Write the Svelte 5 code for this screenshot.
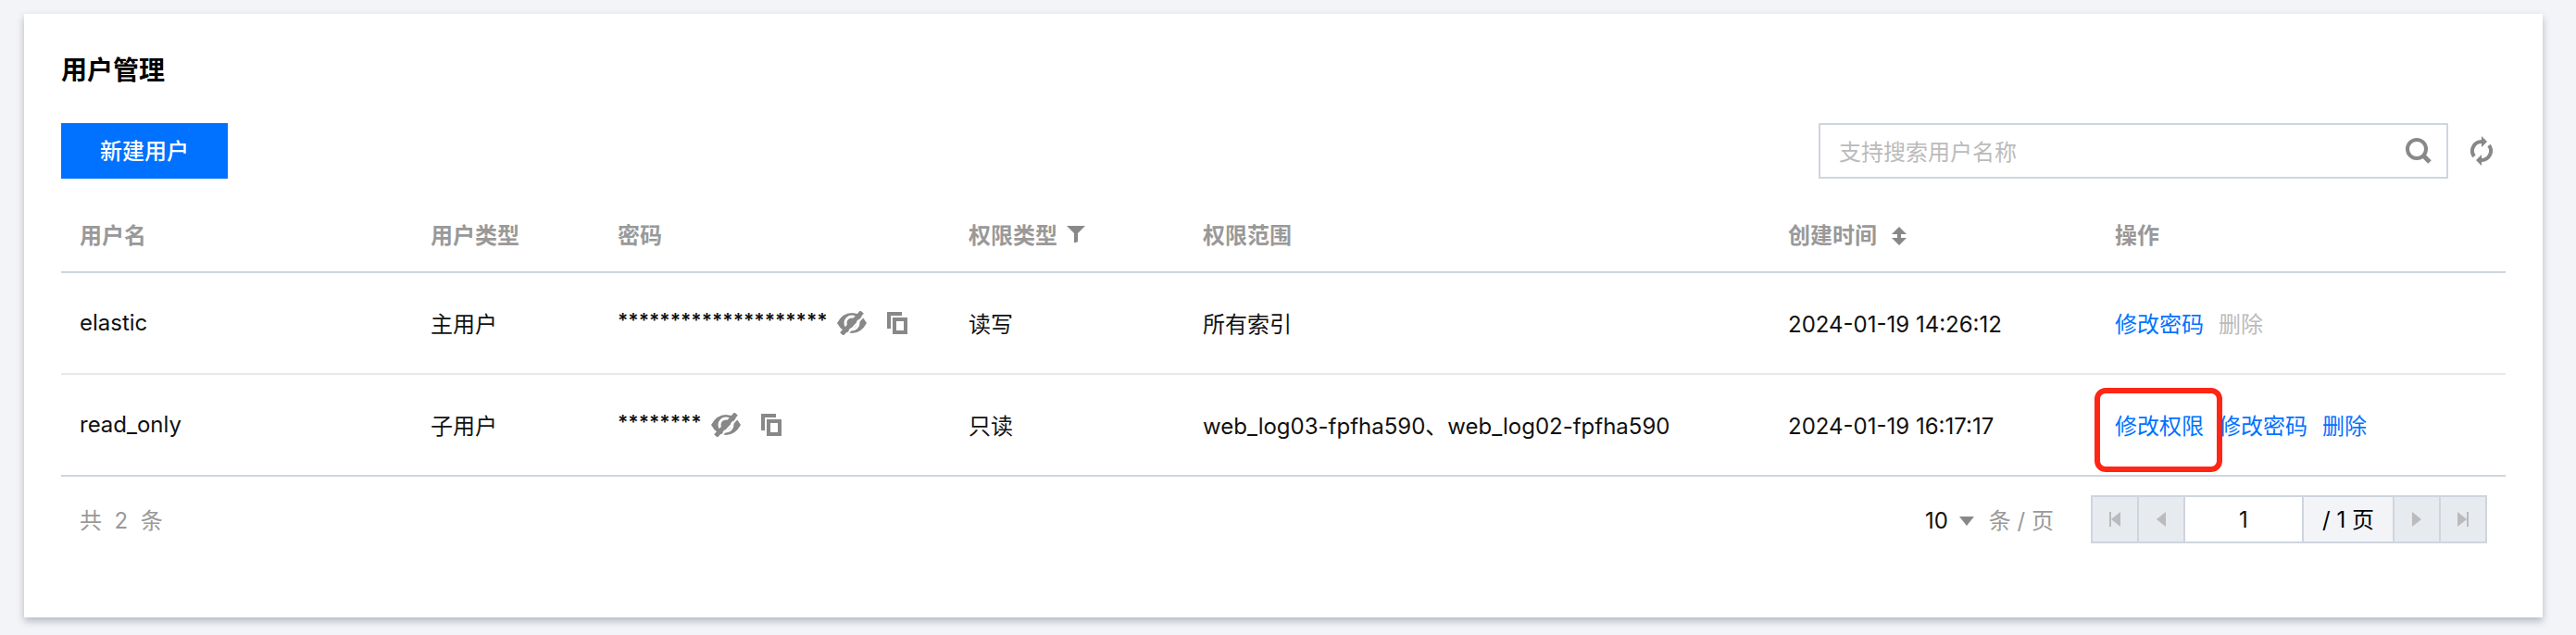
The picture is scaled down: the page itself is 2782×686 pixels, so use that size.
<script lang="ts">
	type User = {
		name: string;
		type: string;
		password: string;
		access: string;
		scope: string;
		createdAt: string;
		actions: { label: string; disabled?: boolean; highlighted?: boolean }[];
	};

	const users: User[] = [
		{
			name: 'elastic',
			type: '主用户',
			password: '********************',
			access: '读写',
			scope: '所有索引',
			createdAt: '2024-01-19 14:26:12',
			actions: [{ label: '修改密码' }, { label: '删除', disabled: true }]
		},
		{
			name: 'read_only',
			type: '子用户',
			password: '********',
			access: '只读',
			scope: 'web_log03-fpfha590、web_log02-fpfha590',
			createdAt: '2024-01-19 16:17:17',
			actions: [{ label: '修改权限', highlighted: true }, { label: '修改密码' }, { label: '删除' }]
		}
	];

	let keyword = $state('');
	let pageSize = $state('10');
	let page = $state('1');

	let rows = $derived(users.filter((u) => u.name.includes(keyword)));
</script>

<main class="card">
	<h1>用户管理</h1>

	<div class="toolbar">
		<button class="btn-primary">新建用户</button>
		<div class="toolbar-right">
			<div class="search">
				<input type="text" aria-label="搜索用户名称" placeholder="支持搜索用户名称" bind:value={keyword} />
				<button class="icon-btn" aria-label="搜索">
					<svg width="28" height="28" viewBox="0 0 28 28">
						<circle cx="12" cy="12" r="10" fill="none" stroke="#888" stroke-width="4" />
						<path d="M19 19l7 7" stroke="#888" stroke-width="5" />
					</svg>
				</button>
			</div>
			<button class="icon-btn" aria-label="刷新">
				<svg width="24" height="32" viewBox="0 0 24 32">
					<path d="M4 22A10 10 0 0 1 12 6M20 10a10 10 0 0 1-8 16" fill="none" stroke="#888" stroke-width="4" />
					<path d="M12 0l6 6-6 6zM12 32l-6-6 6-6z" fill="#888" />
				</svg>
			</button>
		</div>
	</div>

	<table>
		<thead>
			<tr>
				<th class="col-name">用户名</th>
				<th class="col-type">用户类型</th>
				<th class="col-password">密码</th>
				<th class="col-access">
					<span class="th-inner">
						权限类型
						<button class="icon-btn" aria-label="筛选">
							<svg width="20" height="22" viewBox="0 0 20 22" fill="#888">
								<path d="M0 0h20l-8 8v9l-2 1H8V8z" />
							</svg>
						</button>
					</span>
				</th>
				<th class="col-scope">权限范围</th>
				<th class="col-time">
					<span class="th-inner th-sort">
						创建时间
						<button class="icon-btn" aria-label="排序">
							<svg width="16" height="20" viewBox="0 0 16 20" fill="#888">
								<path d="M8 0l8 8h-6v4h6l-8 8-8-8h6V8H0z" />
							</svg>
						</button>
					</span>
				</th>
				<th class="col-actions">操作</th>
			</tr>
		</thead>
		<tbody>
			{#each rows as user}
				<tr>
					<td class="cell-name">{user.name}</td>
					<td>{user.type}</td>
					<td class="cell-password">
						<span class="password">
							<span class="mask">{user.password}</span>
							<button class="icon-btn" aria-label="显示密码">
								<svg width="32" height="26" viewBox="0 0 32 26">
									<path d="M0 13Q6 2 16 2t16 11q-6 11-16 11T0 13z" fill="#888" />
									<circle cx="16" cy="13" r="7" fill="none" stroke="#fff" stroke-width="3" />
									<path d="M8 28L31 3" stroke="#fff" stroke-width="2" />
									<path d="M5 25L27 1" stroke="#888" stroke-width="5" />
								</svg>
							</button>
							<button class="icon-btn" aria-label="复制密码">
								<svg width="22" height="24" viewBox="0 0 22 24" fill="none" stroke="#888" stroke-width="4">
									<path d="M2 18V2h14" />
									<path d="M8 8h12v14H8z" />
								</svg>
							</button>
						</span>
					</td>
					<td>{user.access}</td>
					<td>{user.scope}</td>
					<td>{user.createdAt}</td>
					<td>
						<span class="actions">
							{#each user.actions as action}
								<button class="link" class:highlighted={action.highlighted} disabled={action.disabled}>{action.label}</button>
							{/each}
						</span>
					</td>
				</tr>
			{/each}
		</tbody>
	</table>

	<div class="footer">
		<span class="total">共&nbsp; {rows.length} &nbsp;条</span>
		<div class="paging">
			<label class="page-size">
				<span class="select-wrap">
					<select bind:value={pageSize}>
						<option>10</option>
						<option>20</option>
						<option>50</option>
					</select>
					<svg width="16" height="10" viewBox="0 0 16 10" fill="#888"><path d="M0 0h16L8 10z" /></svg>
				</span>
				条 / 页
			</label>
			<div class="pager">
				<button disabled aria-label="第一页">
					<svg width="12" height="16" viewBox="0 0 12 16" fill="#bbb"><path d="M0 0h2v16H0zM12 0v16L2 8z" /></svg>
				</button>
				<button disabled aria-label="上一页">
					<svg width="10" height="16" viewBox="0 0 10 16" fill="#bbb"><path d="M10 0v16L0 8z" /></svg>
				</button>
				<input type="text" aria-label="页码" bind:value={page} />
				<span class="page-total">/ 1 页</span>
				<button disabled aria-label="下一页">
					<svg width="10" height="16" viewBox="0 0 10 16" fill="#bbb"><path d="M0 0v16l10-8z" /></svg>
				</button>
				<button disabled aria-label="最后一页">
					<svg width="12" height="16" viewBox="0 0 12 16" fill="#bbb"><path d="M10 0h2v16h-2zM0 0v16l10-8z" /></svg>
				</button>
			</div>
		</div>
	</div>
</main>

<style>
	:global(body) {
		background: #f3f4f8;
		color: #111;
		font-family: Inter, 'Noto Sans CJK SC', sans-serif;
		font-size: 24px;
		line-height: 36px;
	}
	svg { display: block; }
	button, input, select {
		font: inherit;
		color: inherit;
		margin: 0;
		padding: 0;
		border: none;
		background: none;
		border-radius: 0;
	}
	.card {
		display: flow-root;
		margin: 15px 36px 19px 26px;
		padding: 40px 40px 80px;
		background: #fff;
		box-shadow: 0 4px 8px rgba(54, 58, 80, 0.32);
	}
	h1 {
		margin: 0 0 36px;
		font-size: 28px;
		line-height: 42px;
		font-weight: 700;
		color: #000;
	}
	.toolbar, .toolbar-right, .footer, .paging {
		display: flex;
		align-items: center;
	}
	.toolbar, .footer { justify-content: space-between; }
	.btn-primary {
		width: 180px;
		height: 60px;
		padding-top: 2px;
		background: #0072ff;
		color: #fff;
		font-weight: 500;
	}
	.toolbar-right {
		gap: 24px;
		padding-right: 14px;
	}
	.search {
		display: flex;
		align-items: center;
		box-sizing: border-box;
		width: 680px;
		height: 60px;
		padding: 0 16px 0 20px;
		border: 2px solid #cfd5de;
	}
	.search input {
		flex: 1;
		min-width: 0;
		padding-top: 4px;
		outline: none;
	}
	.search input::placeholder { color: #bbb; }

	table {
		width: 100%;
		margin-top: 20px;
		border-collapse: separate;
		border-spacing: 0;
		table-layout: fixed;
	}
	th, td {
		box-sizing: border-box;
		padding: 4px 20px 0;
		text-align: left;
		white-space: nowrap;
	}
	th {
		height: 82px;
		border-bottom: 2px solid #cfd5de;
		color: #999;
		font-weight: 700;
	}
	td {
		height: 110px;
		border-bottom: 2px solid #e5e8ed;
	}
	.cell-name, .cell-password { padding-top: 0; }
	tbody tr:last-child td { border-bottom-color: #cfd5de; }
	.col-name { width: 379px; }
	.col-type { width: 202px; }
	.col-password { width: 379px; }
	.col-access { width: 253px; }
	.col-scope { width: 632px; }
	.col-time { width: 353px; }
	.col-actions { width: 442px; }
	.th-inner {
		display: flex;
		align-items: center;
		gap: 10px;
	}
	.th-sort { gap: 16px; }
	.password {
		display: flex;
		align-items: center;
	}
	.mask {
		margin-right: 10px;
		padding-bottom: 4px;
		font-size: 21px;
		font-weight: 600;
	}
	.password .icon-btn + .icon-btn { margin-left: 22px; }
	.actions {
		display: flex;
		gap: 16px;
	}
	.link {
		position: relative;
		color: #0072ff;
	}
	.link:disabled { color: #bbb; }
	.highlighted::after {
		content: '';
		position: absolute;
		z-index: 1;
		inset: -24px -20px -31px -22px;
		border: 6px solid #ff2616;
		border-radius: 12px;
	}

	.footer { padding: 20px 20px 0; }
	.total {
		padding-top: 4px;
		color: #999;
	}
	.paging { gap: 40px; }
	.page-size {
		display: flex;
		align-items: center;
		gap: 16px;
		padding-top: 4px;
		color: #999;
	}
	.select-wrap {
		display: flex;
		align-items: center;
		gap: 12px;
		color: #111;
	}
	select {
		appearance: none;
		field-sizing: content;
		outline: none;
	}
	.pager {
		display: flex;
		box-sizing: border-box;
		height: 52px;
		border: 2px solid #cfd5de;
	}
	.pager > * + * { border-left: 2px solid #cfd5de; }
	.pager button {
		display: flex;
		align-items: center;
		justify-content: center;
		box-sizing: content-box;
		width: 48px;
		background: #e7eaef;
	}
	.pager input {
		width: 126px;
		padding-top: 2px;
		text-align: center;
		outline: none;
	}
	.page-total {
		width: 96px;
		background: #f3f4f8;
		color: #000;
		line-height: 50px;
		text-align: center;
	}
</style>
